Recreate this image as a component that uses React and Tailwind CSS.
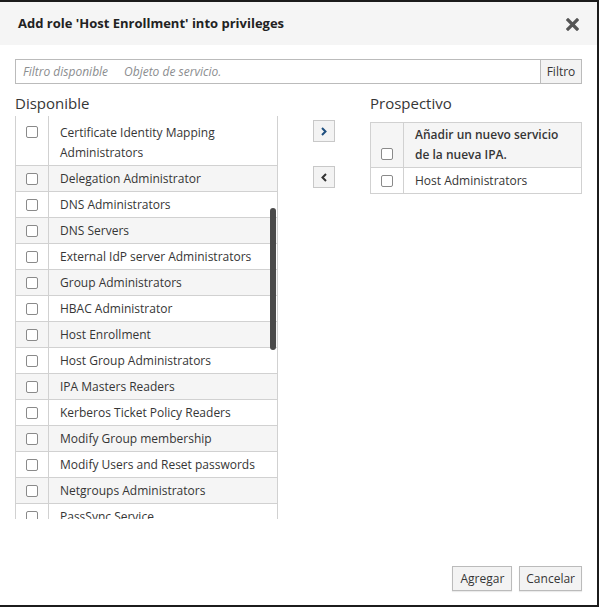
import React from "react";

const items = [
  "Delegation Administrator",
  "DNS Administrators",
  "DNS Servers",
  "External IdP server Administrators",
  "Group Administrators",
  "HBAC Administrator",
  "Host Enrollment",
  "Host Group Administrators",
  "IPA Masters Readers",
  "Kerberos Ticket Policy Readers",
  "Modify Group membership",
  "Modify Users and Reset passwords",
  "Netgroups Administrators",
  "PassSync Service",
];

function Box() {
  return <span className="block w-[12px] h-[12px] rounded-[2px] border border-[#8a8a8a] bg-white" />;
}

export default function App() {
  return (
    <div className="w-[599px] h-[607px] bg-[#1c1c1c] pt-[2px] pr-[2px] pb-[2px] font-['Open_Sans',sans-serif] text-[#363636]">
      <div className="w-[597px] h-[603px] bg-white flex flex-col">
        <div className="h-[43px] bg-[#f5f5f5] flex items-center justify-between pl-[18px] pr-[18px] pt-[1px]">
          <span className="text-[13px] font-bold text-[#222]">Add role 'Host Enrollment' into privileges</span>
          <svg width="13" height="13" viewBox="0 0 13 13">
            <path d="M2 2 L11 11 M11 2 L2 11" stroke="#555" strokeWidth="3.2" strokeLinecap="square" />
          </svg>
        </div>
        <div className="px-[15px] pt-[14px] flex flex-col flex-1">
          <div className="flex h-[25px]">
            <div className="flex-1 border border-[#bbb] flex items-center pl-[7px] text-[12px] italic text-[#8b8d8f] gap-[16px]">
              <span>Filtro disponible</span>
              <span>Objeto de servicio.</span>
            </div>
            <button className="w-[41px] border border-l-0 border-[#bbb] bg-[#f3f3f3] text-[12px] text-[#363636]">Filtro</button>
          </div>
          <div className="flex mt-[9px]">
            <div className="w-[263px] flex flex-col">
              <div className="text-[15px] leading-[20px] h-[23px]">Disponible</div>
              <div className="relative h-[403px] overflow-hidden border-l border-r border-[#d1d1d1]">
                <div className="flex border-b border-[#d1d1d1] bg-white">
                  <div className="w-[33px] border-r border-[#d1d1d1] flex justify-center pt-[10px]"><Box /></div>
                  <div className="flex-1 pl-[11px] pt-[7px] pb-[2px] text-[12px] leading-[20px]">Certificate Identity Mapping<br />Administrators</div>
                </div>
                {items.map((t, i) => (
                  <div key={t} className={"flex h-[26px] border-b border-[#d1d1d1] " + (i % 2 === 0 ? "bg-[#f5f5f5]" : "bg-white")}>
                    <div className="w-[33px] border-r border-[#d1d1d1] flex items-center justify-center"><Box /></div>
                    <div className="flex-1 pl-[11px] flex items-center text-[12px]">{t}</div>
                  </div>
                ))}
                <div className="absolute left-[254px] top-[92px] w-[6px] h-[142px] rounded-[3px] bg-[#4a4a4a]" />
              </div>
            </div>
            <div className="w-[92px] flex flex-col items-center pt-[27px] gap-[24px]">
              <button className="w-[22px] h-[22px] border border-[#c8c8c8] bg-[#f3f3f3] flex items-center justify-center">
                <svg width="8" height="9" viewBox="0 0 8 9"><path d="M2 1 L5.5 4.5 L2 8" stroke="#1f4f7f" strokeWidth="2" fill="none" /></svg>
              </button>
              <button className="w-[22px] h-[22px] border border-[#c8c8c8] bg-[#f3f3f3] flex items-center justify-center">
                <svg width="8" height="9" viewBox="0 0 8 9"><path d="M6 1 L2.5 4.5 L6 8" stroke="#333" strokeWidth="2" fill="none" /></svg>
              </button>
            </div>
            <div className="flex-1 flex flex-col">
              <div className="text-[15px] leading-[20px] h-[29px]">Prospectivo</div>
              <div className="border border-[#d1d1d1]">
                <div className="flex bg-[#f5f5f5] border-b border-[#d1d1d1]">
                  <div className="w-[33px] border-r border-[#d1d1d1] flex justify-center items-end pb-[7px]"><Box /></div>
                  <div className="flex-1 pl-[11px] pt-[2px] pb-[2px] text-[12px] leading-[20px] font-semibold">Añadir un nuevo servicio<br />de la nueva IPA.</div>
                </div>
                <div className="flex h-[25px] bg-white">
                  <div className="w-[33px] border-r border-[#d1d1d1] flex items-center justify-center"><Box /></div>
                  <div className="flex-1 pl-[11px] flex items-center text-[12px]">Host Administrators</div>
                </div>
              </div>
            </div>
          </div>
          <div className="flex justify-end gap-[7px] mt-[47px]">
            <button className="h-[25px] px-[7px] border border-[#bbb] bg-[#f3f3f3] text-[12px] text-[#363636] shadow-[0_1px_1px_rgba(0,0,0,0.08)]">Agregar</button>
            <button className="h-[25px] px-[6px] border border-[#bbb] bg-[#f3f3f3] text-[12px] text-[#363636] shadow-[0_1px_1px_rgba(0,0,0,0.08)]">Cancelar</button>
          </div>
        </div>
      </div>
    </div>
  );
}
